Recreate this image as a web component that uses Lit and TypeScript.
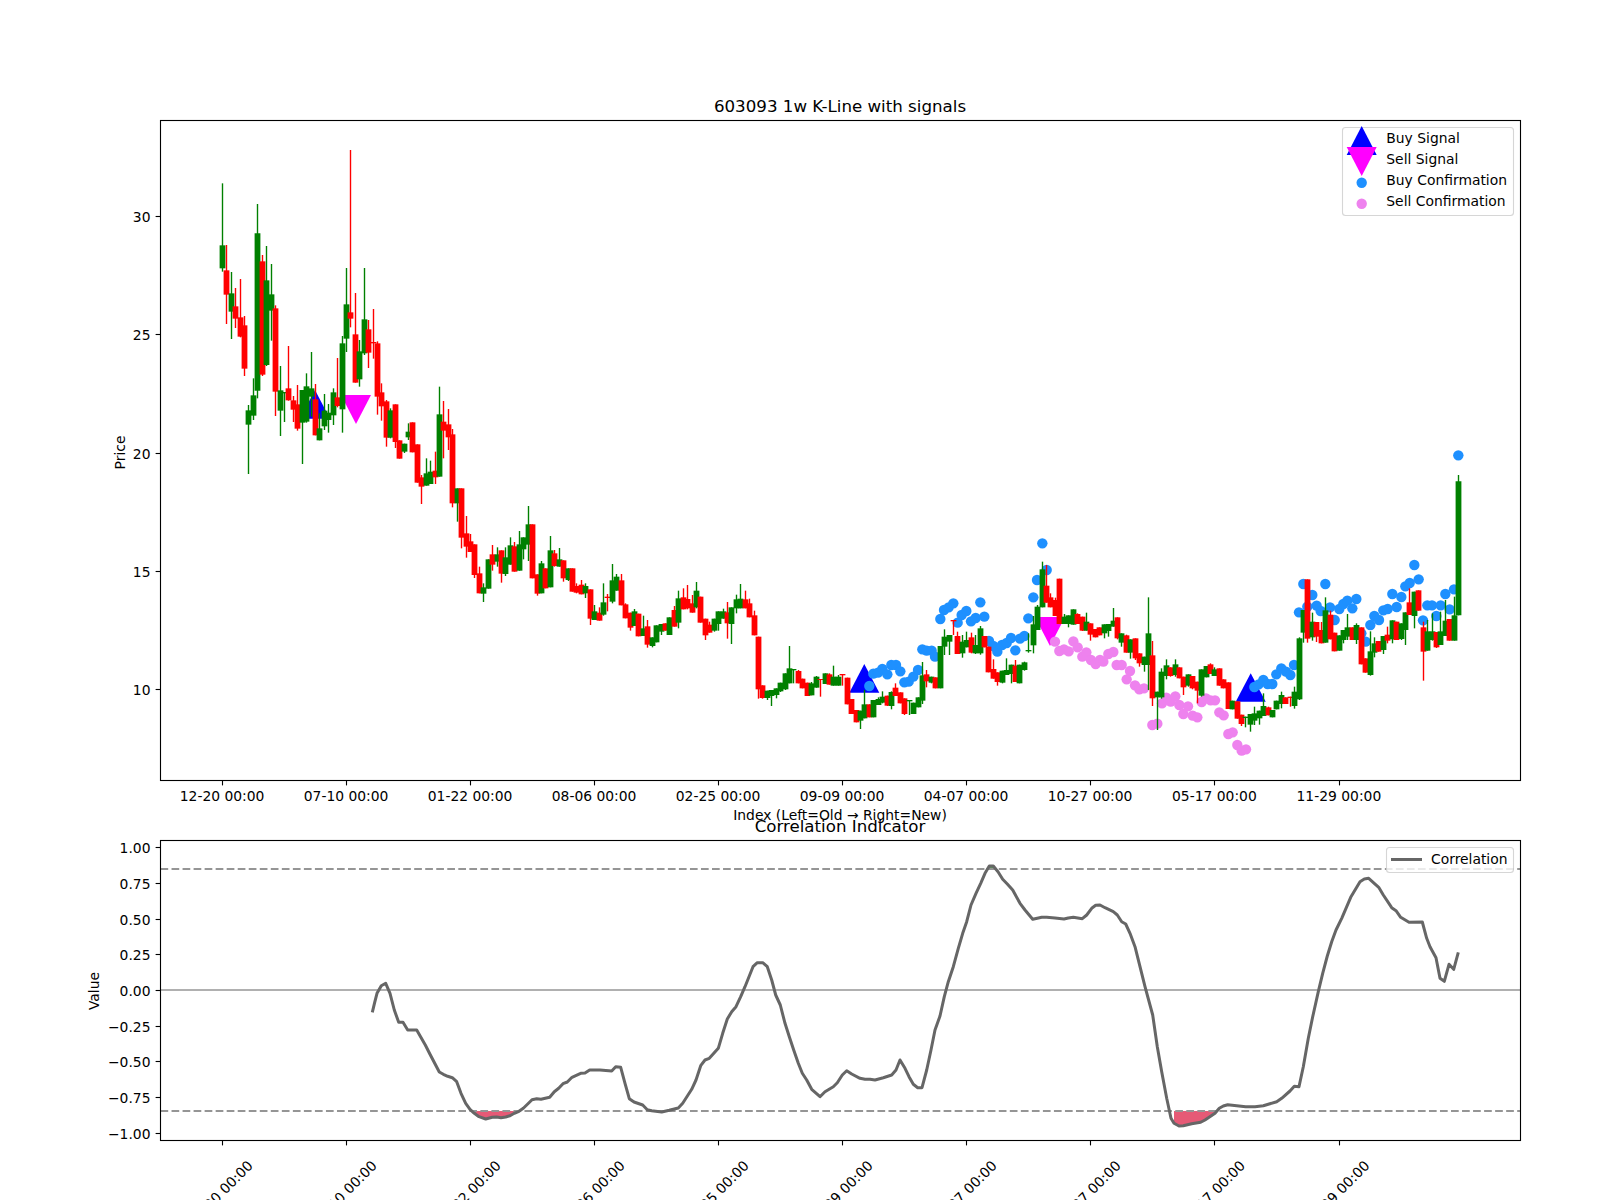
import { LitElement, html, svg, css } from "lit";
import { customElement } from "lit/decorators.js";

const G = "#008000";
const R = "#ff0000";
type C = [string, number, number, number, number];

// Candles: colour, body top, body bottom, wick top, wick bottom (3x-scaled px relative to a base y)
const groups: { start: number; base: number; rows: C[] }[] = [
  { start: 0, base: 100, rows: [
    [G,436,505,250,515],[R,511,584,435,672],[G,580,635,516,717],[R,619,656,564,684],[R,652,710,537,712],
    [R,676,806,648,828],[G,931,974,915,1122],[G,886,947,835,960],[G,400,872,312,895],[R,484,824,465,828],
    [G,541,795,438,798],[G,583,632,492,722],[R,625,875,616,948],[G,871,932,798,1008],[G,876,880,876,966],
    [R,865,901,738,902],[R,901,929,888,966],[R,913,986,855,992],[G,870,968,870,1092],[G,859,965,820,968],
    [G,865,890,756,950],[R,898,1006,852,1006],[G,985,1021,940,1021],[G,932,979,882,990],[G,938,960,912,998],
    [G,877,946,865,975],[R,892,918,774,922],[G,730,928,708,998],[G,613,716,504,756],[R,637,656,150,682],
    [R,703,848,579,848],[G,754,838,720,860],[G,658,760,504,765],[R,688,758,660,804],[R,726,730,627,776],
    [R,730,890,724,944],[R,877,919,850,962],[R,904,1013,900,1040],[G,931,1013,925,1015],[R,913,1026,913,1044],
    [R,1021,1076,1021,1076],[G,1031,1055,1031,1059],[G,995,1012,970,1020],[R,967,1057,967,1057],[R,1033,1148,1033,1148],
  ]},
  { start: 45, base: 450, rows: [
    [R,82,110,75,162],[G,70,107,25,107],[G,65,102,32,102],[R,62,82,5,102],[G,-107,80,-190,80],
    [R,-85,-58,-147,25],[R,-77,-38,-123,0],[R,-47,160,-63,172],[G,115,160,115,215],[R,115,263,115,295],
    [R,250,290,198,323],[R,274,306,252,306],[R,283,375,283,384],[R,370,430,350,430],[G,412,431,400,456],
    [G,328,416,328,416],[R,313,344,285,362],[G,313,335,292,350],[R,301,371,301,398],[G,322,372,292,378],
    [G,286,344,262,344],[R,289,365,276,365],[G,283,362,243,362],[G,262,298,262,328],[G,223,284,168,333],
    [R,223,385,223,385],[R,373,431,373,437],[G,340,430,333,430],[R,355,415,355,415],[G,301,412,258,412],
    [R,310,348,300,350],[G,328,350,294,350],[R,331,385,331,395],[G,355,390,355,393],[R,355,425,355,425],
    [R,408,428,400,430],[R,404,433,390,433],[G,408,430,400,444],[R,418,506,418,525],[G,484,510,465,510],
    [R,488,512,472,512],[G,457,494,400,497],[R,440,444,432,484],[G,391,455,342,460],[G,380,422,372,422],
    [R,391,466,372,466],[R,463,505,460,505],[R,488,533,488,542],[G,484,528,477,528],[R,491,559,491,559],
    [G,535,558,497,558],[R,529,584,510,593],
  ]},
  { start: 97, base: 520, rows: [
    [G,352,378,352,382],[G,316,367,316,367],[G,312,335,312,345],[R,310,332,310,332],[G,292,345,292,345],
    [R,270,320,258,320],[G,235,308,212,325],[R,232,268,205,268],[R,237,265,195,268],[R,250,278,225,278],
    [G,212,262,186,265],[R,230,308,230,308],[R,296,346,296,360],[R,314,338,305,338],[G,296,332,296,335],
    [G,274,312,274,332],[G,274,296,266,296],[R,277,310,246,356],[G,262,312,262,372],[G,238,265,224,280],
    [G,236,265,192,265],[R,238,265,212,265],[R,250,292,236,292],[R,286,346,272,346],[R,350,508,350,536],
    [R,496,534,496,536],[G,512,534,512,540],[G,510,528,510,558],[G,505,525,505,535],[G,488,514,488,516],
    [G,460,508,460,510],[G,445,490,378,490],[G,447,451,447,490],[R,453,490,450,490],[R,476,505,476,505],
    [R,488,528,488,528],[G,490,526,486,526],[G,470,503,468,503],[R,477,480,477,530],[G,460,492,460,492],
    [R,463,494,460,494],[G,470,497,437,497],[G,470,497,465,497],[R,462,466,462,497],[R,473,553,473,553],
    [R,537,582,537,582],[R,570,607,570,607],[G,572,602,572,627],[G,553,595,510,595],[R,553,592,553,592],
    [G,540,592,540,592],[G,537,555,532,555],[G,530,548,514,550],[R,527,557,527,558],[G,516,558,514,568],
    [R,503,528,490,528],[R,517,550,517,550],[R,535,582,535,585],[G,540,544,540,585],[G,548,582,548,582],
    [G,532,562,532,562],[G,466,542,426,552],[R,463,484,450,502],[G,470,488,470,490],[R,472,505,472,505],
    [G,378,505,378,505],[G,350,380,328,405],[G,345,365,345,405],[R,300,304,300,345],[R,348,402,335,402],
    [G,365,400,345,413],[G,360,382,335,382],[R,352,398,338,400],[G,375,400,345,402],[G,325,400,318,404],
    [R,348,382,348,382],[R,380,457,380,457],[R,447,476,418,476],[R,457,486,457,497],[G,452,488,452,490],
    [G,450,465,415,465],[G,434,462,434,490],[R,437,486,420,486],[G,434,490,434,490],[G,427,450,425,452],
    [G,390,394,340,398],[G,313,376,288,400],[G,260,330,255,330],[G,148,262,125,262],[R,197,248,135,248],
    [R,232,262,220,262],[R,240,288,233,288],[R,176,312,176,312],[G,290,312,282,312],[G,286,312,286,322],
    [G,268,314,268,314],[R,282,312,280,312],[R,290,332,290,333],[G,305,332,278,332],[R,310,344,310,362],
    [R,327,352,327,352],[R,322,346,322,346],
  ]},
  { start: 199, base: 430, rows: [
    [G,583,610,583,625],[G,582,603,582,620],[G,572,590,534,590],[R,562,625,562,628],[G,610,638,610,650],
    [R,616,668,614,668],[G,628,668,628,686],[R,625,685,625,690],[R,670,700,670,710],[G,680,705,680,725],
    [G,610,705,502,780],[R,676,805,633,828],[G,785,802,785,900],[G,725,802,715,806],[G,706,738,688,748],
    [R,712,738,712,740],[G,703,735,688,740],[R,712,745,712,745],[R,740,772,740,795],[G,733,767,733,770],
    [R,738,775,738,778],[R,755,782,755,820],[G,718,797,718,800],[G,708,742,708,742],[R,703,732,700,732],
    [G,718,738,712,738],[R,715,767,715,767],[R,748,775,748,775],[R,757,837,757,837],[G,812,838,812,838],
    [R,814,866,814,866],[R,854,882,854,888],[G,860,864,860,892],[G,852,884,852,905],[G,850,872,830,885],
    [G,842,865,842,884],[G,828,858,790,858],[R,832,856,830,856],[G,840,862,840,862],[G,812,838,812,838],
    [G,795,822,785,835],[R,802,822,802,822],[R,800,804,800,830],[G,785,828,770,836],[G,625,808,622,810],
    [G,540,608,540,638],[R,448,626,448,638],[G,575,622,548,632],[R,576,620,576,636],[R,600,640,576,640],
    [G,541,638,502,638],[R,554,628,542,628],[R,608,664,608,664],[G,616,662,616,662],[G,600,630,600,640],
    [G,592,620,552,630],[R,592,630,592,630],[G,585,630,580,642],[R,592,703,592,703],[R,685,728,685,728],
    [G,664,735,604,737],[G,640,668,622,682],[R,633,665,633,665],[G,618,660,618,672],[R,614,632,590,640],
    [G,571,628,571,640],[R,575,630,575,630],[G,580,627,580,630],[G,547,600,547,645],[R,517,555,475,555],
    [G,485,558,485,595],[R,481,542,481,542],[R,592,665,575,752],[G,604,662,570,662],[G,604,630,550,632],
    [R,606,652,606,654],[G,604,645,545,645],[G,572,618,510,618],[R,567,632,567,632],[G,556,632,500,632],
    [G,154,556,135,556],
  ]},
];

const cx = (i: number) => 222.4 + 4.431 * i;
const snap = (x: number) => Math.floor(x) + 0.5;

const candles = groups.flatMap((g) =>
  g.rows.map((r, k) => ({
    x: snap(cx(g.start + k)),
    color: r[0],
    top: g.base + r[1] / 3,
    bot: g.base + r[2] / 3,
    wt: g.base + r[3] / 3,
    wb: g.base + r[4] / 3,
  }))
);

const blue4: number[][] = [
  [658,498],[670,461],[684,458],[697,447],[712,463],[724,435],[738,435],[751,454],[763,487],[776,485],[790,470],
  [804,450],[817,388],[830,392],[845,392],[855,410],[871,297],[882,270],[896,262],[910,250],[923,308],[935,285],
  [949,273],[963,304],[977,294],[991,247],[1003,290],[1017,363],[1030,378],[1042,395],[1056,375],[1070,369],
  [1083,354],[1096,391],[1110,356],[1123,348],[1135,295],[1150,232],[1161,180],[1177,70],[1190,150],
];
const blue5: number[][] = [
  [463,771],[476,763],[490,750],[503,762],[517,762],[529,733],[544,715],[558,725],[571,735],[582,705],[597,547],
  [610,462],[622,530],[637,495],[650,527],[662,543],[676,462],[690,532],[704,570],[718,537],[730,522],[742,512],
  [757,535],[769,507],[784,610],[797,635],[811,585],[823,558],[837,570],[850,541],[863,537],[877,492],[890,531],
  [904,501],[916,469],[929,459],[943,405],[956,448],[969,571],[982,526],[996,526],[1009,558],[1022,526],[1036,492],
  [1049,538],[1062,478],[1075,76],
];
const pink4: number[][] = [
  [1215,365],[1228,393],[1242,388],[1256,394],[1270,364],[1283,382],[1297,410],[1309,397],[1323,420],[1337,432],[1350,420],
];
const pink5: number[][] = [
  [10,695],[25,672],[40,666],[50,705],[65,705],[90,723],[80,748],[105,766],[118,778],[132,775],[157,885],[172,881],
  [186,820],[199,803],[212,815],[226,799],[238,825],[250,852],[264,829],[278,857],[292,862],[305,816],[318,805],
  [332,811],[345,811],[358,847],[371,856],[385,912],[398,907],[412,945],[425,962],[438,958],
];
const from = (pts: number[][], ox: number, oy: number) => pts.map(([x, y]) => [ox + x / 3, oy + y / 3]);
const blue = [...from(blue4, 650, 520), ...from(blue5, 1100, 430)];
const pink = [...from(pink4, 650, 520), ...from(pink5, 1100, 430)];

const line6 = from([
  [877,607],[884,577],[891,550],[904,527],[917,520],[930,550],[943,600],[956,637],[969,637],[983,660],[1010,660],
  [1036,705],[1050,733],[1078,786],[1090,793],[1103,799],[1117,803],[1130,815],[1143,850],[1157,880],[1170,898],
  [1183,910],[1197,920],[1217,927],[1237,922],[1250,921],[1263,923],[1277,921],[1290,917],[1303,910],[1317,904],
  [1330,895],[1343,882],[1356,869],[1370,866],[1383,868],[1396,865],[1409,862],[1423,845],[1436,835],[1449,821],
  [1462,816],[1476,802],[1489,796],[1502,790],[1515,789],[1529,780],[1560,780],
], 80, 810);
const line7 = from([
  [35,783],[47,770],[62,772],[75,820],[88,866],[102,876],[128,885],[142,899],[155,902],[185,906],[208,901],[235,894],
  [248,880],[275,838],[288,810],[302,767],[315,750],[328,745],[355,715],[368,670],[382,627],[395,605],[408,590],
  [422,560],[435,530],[459,470],[472,458],[488,458],[502,470],[515,510],[527,555],[541,585],[555,640],[568,680],
  [581,720],[595,760],[607,790],[620,810],[635,838],[660,860],[675,845],[700,830],[712,818],[727,795],[740,782],
  [755,792],[780,805],[795,808],[810,808],[825,810],[850,803],[875,795],[888,780],[900,750],[915,775],[927,800],
  [940,823],[953,833],[966,833],[980,780],[993,720],[1005,660],[1020,618],[1033,560],[1045,515],[1060,470],
  [1075,415],[1088,370],[1100,335],[1113,285],[1128,250],[1142,220],[1155,190],[1168,168],[1180,168],[1194,185],
  [1208,208],[1222,222],[1238,240],[1260,280],[1275,300],[1298,328],[1312,325],[1325,322],[1340,322],[1365,324],
  [1392,327],[1405,324],[1420,322],[1447,326],[1460,315],[1475,295],[1487,286],
], 600, 810);
const line8 = from([
  [0,285],[15,293],[40,305],[52,315],[65,335],[77,342],[90,370],[105,410],[120,470],[135,530],[158,615],[172,710],
  [185,785],[200,865],[213,925],[222,940],[237,948],[250,947],[275,941],[302,937],[315,930],[345,910],[358,895],
  [370,888],[383,884],[410,887],[437,890],[465,890],[490,887],[530,875],[545,865],[570,843],[583,829],[597,830],
  [610,770],[625,685],[638,620],[655,545],[668,490],[682,438],[695,395],[708,360],[725,325],[752,262],[780,215],
  [793,207],[806,205],[836,232],[850,255],[875,293],[888,302],[902,322],[927,337],[967,336],[980,385],[990,410],
  [1008,443],[1020,505],[1033,514],[1047,463],[1061,478],[1075,427],
], 1100, 810);
const corr = [...line6, ...line7, ...line8];
const ptStr = (p: number[][]) => p.map(([x, y]) => `${x.toFixed(1)},${y.toFixed(1)}`).join(" ");

const lowFill = (a: number, b: number) => {
  const seg = corr.filter(([x]) => x >= a && x <= b);
  return ptStr([[a, 1111], ...seg, [b, 1111]]);
};

const tri = (x: number, top: number, bot: number, up: boolean) =>
  up ? `${x},${top} ${x - 15},${bot} ${x + 15},${bot}` : `${x - 15},${top} ${x + 15},${top} ${x},${bot}`;

const xTicks = [
  ["12-20 00:00", 222.3], ["07-10 00:00", 346.3], ["01-22 00:00", 470.3], ["08-06 00:00", 594.3],
  ["02-25 00:00", 718.3], ["09-09 00:00", 842.3], ["04-07 00:00", 966.3], ["10-27 00:00", 1090.3],
  ["05-17 00:00", 1214.6], ["11-29 00:00", 1339.1],
] as [string, number][];
const yTop = [["30", 216.5], ["25", 334.5], ["20", 453.5], ["15", 571.5], ["10", 689.5]] as [string, number][];
const yLow = [
  ["1.00", 847.5], ["0.75", 883.5], ["0.50", 919.5], ["0.25", 954.5], ["0.00", 990.5],
  ["\u22120.25", 1026.5], ["\u22120.50", 1061.5], ["\u22120.75", 1097.5], ["\u22121.00", 1133.5],
] as [string, number][];

@customElement("app-root")
export class AppRoot extends LitElement {
  static styles = css`
    :host { display: block; width: 1600px; height: 1200px; background: #fff; }
    svg { display: block; }
    text { font-family: "DejaVu Sans", sans-serif; font-size: 13.89px; fill: #000; }
    .title { font-size: 16.67px; text-anchor: middle; }
    .mid { text-anchor: middle; }
    .end { text-anchor: end; dominant-baseline: central; }
    .cen { text-anchor: middle; dominant-baseline: central; }
    .start { dominant-baseline: central; }
    .spine { fill: none; stroke: #000; stroke-width: 1.11; }
    .tick { stroke: #000; stroke-width: 1.11; }
    .wick { stroke-width: 1.39; }
    .body { stroke-width: 5.8; }
    .dash { stroke: #959595; stroke-width: 2.08; stroke-dasharray: 7.7 3.33; }
    .zero { stroke: #b0b0b0; stroke-width: 2; }
    .corr { fill: none; stroke: #666; stroke-width: 3; stroke-linejoin: round; }
    .sample { stroke: #666; stroke-width: 3; }
    .fill-low { fill: #dc143c; fill-opacity: 0.7; }
    .fill-high { fill: #008000; fill-opacity: 0.7; }
    .legend { fill: #fff; fill-opacity: 0.8; stroke: #ccc; stroke-opacity: 0.8; stroke-width: 1.11; }
    .buy { fill: #0000ff; }
    .sell { fill: #ff00ff; }
    .bc { fill: #1e90ff; }
    .sc { fill: #ee82ee; }
  `;

  render() {
    return html`<svg width="1600" height="1200" viewBox="0 0 1600 1200">
      <text class="title" x="840" y="112">603093 1w K-Line with signals</text>

      <polygon class="buy" points=${tri(315, 390, 418.7, true)}></polygon>
      <polygon class="buy" points=${tri(864.3, 664, 692.7, true)}></polygon>
      <polygon class="buy" points=${tri(1250.7, 673.3, 701.7, true)}></polygon>
      <polygon class="sell" points=${tri(356, 395, 424, false)}></polygon>
      <polygon class="sell" points=${tri(1050, 617, 646, false)}></polygon>
      ${blue.map(([x, y]) => svg`<circle class="bc" cx=${x} cy=${y} r="5.2"></circle>`)}
      ${pink.map(([x, y]) => svg`<circle class="sc" cx=${x} cy=${y} r="5.2"></circle>`)}
      ${candles.map((c) => svg`
        <line class="wick" stroke=${c.color} x1=${c.x} x2=${c.x} y1=${c.wt} y2=${c.wb}></line>
        <line class="body" stroke=${c.color} x1=${c.x} x2=${c.x} y1=${c.top} y2=${c.bot}></line>`)}

      <rect class="spine" x="160.5" y="120.5" width="1360" height="660"></rect>
      ${xTicks.map(([t, x]) => svg`
        <line class="tick" x1=${snap(x)} x2=${snap(x)} y1="780.5" y2="785.4"></line>
        <text class="cen" x=${x - 0.2} y="796">${t}</text>`)}
      ${yTop.map(([t, y]) => svg`
        <line class="tick" x1="155.6" x2="160.5" y1=${y} y2=${y}></line>
        <text class="end" x="150.5" y=${y}>${t}</text>`)}
      <text class="mid" x="840" y="820">Index (Left=Old → Right=New)</text>
      <text class="cen" transform="translate(119.5 452.5) rotate(-90)">Price</text>

      <rect class="legend" x="1342.5" y="127.5" width="171" height="88" rx="3"></rect>
      <polygon class="buy" points=${tri(1361.7, 126, 155, true)}></polygon>
      <polygon class="sell" points=${tri(1361.7, 147, 176, false)}></polygon>
      <circle class="bc" cx="1361.7" cy="182.7" r="5.2"></circle>
      <circle class="sc" cx="1361.7" cy="203.7" r="5.2"></circle>
      <text class="start" x="1386.3" y="138.3">Buy Signal</text>
      <text class="start" x="1386.3" y="159">Sell Signal</text>
      <text class="start" x="1386.3" y="180">Buy Confirmation</text>
      <text class="start" x="1386.3" y="201">Sell Confirmation</text>

      <polygon class="fill-low" points=${lowFill(474, 519)}></polygon>
      <polygon class="fill-low" points=${lowFill(1174, 1216.7)}></polygon>
      <polygon class="fill-high" points="986,869 989,866 993,866 996,869"></polygon>
      <line class="dash" x1="160.5" x2="1520" y1="869" y2="869"></line>
      <line class="dash" x1="160.5" x2="1520" y1="1111" y2="1111"></line>
      <line class="zero" x1="161" x2="1520" y1="990" y2="990"></line>
      <polyline class="corr" points=${ptStr(corr)}></polyline>

      <rect class="spine" x="160.5" y="840.5" width="1360" height="300"></rect>
      ${xTicks.map(([t, x]) => svg`
        <line class="tick" x1=${snap(x)} x2=${snap(x)} y1="1140.5" y2="1145.4"></line>
        <text class="cen" transform="translate(${x - 2} 1193) rotate(-45)">${t}</text>`)}
      ${yLow.map(([t, y]) => svg`
        <line class="tick" x1="155.6" x2="160.5" y1=${y} y2=${y}></line>
        <text class="end" x="150.5" y=${y}>${t}</text>`)}
      <text class="cen" transform="translate(94 991) rotate(-90)">Value</text>
      <text class="title" x="840" y="831.6">Correlation Indicator</text>

      <rect class="legend" x="1386.5" y="847.5" width="127" height="25" rx="3"></rect>
      <line class="sample" x1="1391" x2="1422" y1="859.5" y2="859.5"></line>
      <text class="start" x="1431" y="859">Correlation</text>
    </svg>`;
  }
}
